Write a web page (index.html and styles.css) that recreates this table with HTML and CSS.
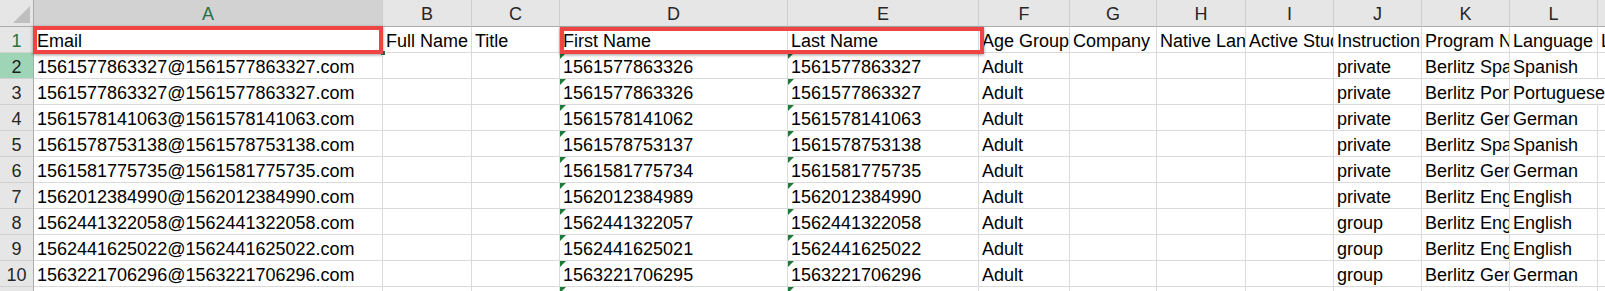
FILE: index.html
```html
<!DOCTYPE html>
<html lang="en">

<head>
    <meta charset="UTF-8">
    <meta name="viewport" content="width=device-width, initial-scale=1.0">
    <title>Students export</title>
    <link rel="stylesheet" href="styles.css">
</head>

<body>

    <div class="sheet">
        <!-- column headers -->
        <div class="corner"><span class="corner-tri"></span></div>
        <div class="col-head active">A</div>
        <div class="col-head">B</div>
        <div class="col-head">C</div>
        <div class="col-head">D</div>
        <div class="col-head">E</div>
        <div class="col-head">F</div>
        <div class="col-head">G</div>
        <div class="col-head">H</div>
        <div class="col-head">I</div>
        <div class="col-head">J</div>
        <div class="col-head">K</div>
        <div class="col-head">L</div>
        <div class="col-head">M</div>

        <!-- row 1 -->
        <div class="row-head current">1</div>
        <div class="cell">Email</div>
        <div class="cell">Full Name</div>
        <div class="cell">Title</div>
        <div class="cell">First Name</div>
        <div class="cell">Last Name</div>
        <div class="cell">Age Group</div>
        <div class="cell">Company</div>
        <div class="cell">Native Language</div>
        <div class="cell">Active Student</div>
        <div class="cell">Instruction Type</div>
        <div class="cell">Program Name</div>
        <div class="cell">Language</div>
        <div class="cell">Level</div>

        <!-- row 2 -->
        <div class="row-head picked">2</div>
        <div class="cell">1561577863327@1561577863327.com</div>
        <div class="cell"></div>
        <div class="cell"></div>
        <div class="cell txt">1561577863326</div>
        <div class="cell txt">1561577863327</div>
        <div class="cell">Adult</div>
        <div class="cell"></div>
        <div class="cell"></div>
        <div class="cell"></div>
        <div class="cell">private</div>
        <div class="cell">Berlitz Spanish</div>
        <div class="cell">Spanish</div>
        <div class="cell"></div>

        <!-- row 3 -->
        <div class="row-head">3</div>
        <div class="cell">1561577863327@1561577863327.com</div>
        <div class="cell"></div>
        <div class="cell"></div>
        <div class="cell txt">1561577863326</div>
        <div class="cell txt">1561577863327</div>
        <div class="cell">Adult</div>
        <div class="cell"></div>
        <div class="cell"></div>
        <div class="cell"></div>
        <div class="cell">private</div>
        <div class="cell">Berlitz Portuguese</div>
        <div class="cell spill">Portuguese</div>
        <div class="cell"></div>

        <!-- row 4 -->
        <div class="row-head">4</div>
        <div class="cell">1561578141063@1561578141063.com</div>
        <div class="cell"></div>
        <div class="cell"></div>
        <div class="cell txt">1561578141062</div>
        <div class="cell txt">1561578141063</div>
        <div class="cell">Adult</div>
        <div class="cell"></div>
        <div class="cell"></div>
        <div class="cell"></div>
        <div class="cell">private</div>
        <div class="cell">Berlitz German</div>
        <div class="cell">German</div>
        <div class="cell"></div>

        <!-- row 5 -->
        <div class="row-head">5</div>
        <div class="cell">1561578753138@1561578753138.com</div>
        <div class="cell"></div>
        <div class="cell"></div>
        <div class="cell txt">1561578753137</div>
        <div class="cell txt">1561578753138</div>
        <div class="cell">Adult</div>
        <div class="cell"></div>
        <div class="cell"></div>
        <div class="cell"></div>
        <div class="cell">private</div>
        <div class="cell">Berlitz Spanish</div>
        <div class="cell">Spanish</div>
        <div class="cell"></div>

        <!-- row 6 -->
        <div class="row-head">6</div>
        <div class="cell">1561581775735@1561581775735.com</div>
        <div class="cell"></div>
        <div class="cell"></div>
        <div class="cell txt">1561581775734</div>
        <div class="cell txt">1561581775735</div>
        <div class="cell">Adult</div>
        <div class="cell"></div>
        <div class="cell"></div>
        <div class="cell"></div>
        <div class="cell">private</div>
        <div class="cell">Berlitz German</div>
        <div class="cell">German</div>
        <div class="cell"></div>

        <!-- row 7 -->
        <div class="row-head">7</div>
        <div class="cell">1562012384990@1562012384990.com</div>
        <div class="cell"></div>
        <div class="cell"></div>
        <div class="cell txt">1562012384989</div>
        <div class="cell txt">1562012384990</div>
        <div class="cell">Adult</div>
        <div class="cell"></div>
        <div class="cell"></div>
        <div class="cell"></div>
        <div class="cell">private</div>
        <div class="cell">Berlitz English</div>
        <div class="cell">English</div>
        <div class="cell"></div>

        <!-- row 8 -->
        <div class="row-head">8</div>
        <div class="cell">1562441322058@1562441322058.com</div>
        <div class="cell"></div>
        <div class="cell"></div>
        <div class="cell txt">1562441322057</div>
        <div class="cell txt">1562441322058</div>
        <div class="cell">Adult</div>
        <div class="cell"></div>
        <div class="cell"></div>
        <div class="cell"></div>
        <div class="cell">group</div>
        <div class="cell">Berlitz English</div>
        <div class="cell">English</div>
        <div class="cell"></div>

        <!-- row 9 -->
        <div class="row-head">9</div>
        <div class="cell">1562441625022@1562441625022.com</div>
        <div class="cell"></div>
        <div class="cell"></div>
        <div class="cell txt">1562441625021</div>
        <div class="cell txt">1562441625022</div>
        <div class="cell">Adult</div>
        <div class="cell"></div>
        <div class="cell"></div>
        <div class="cell"></div>
        <div class="cell">group</div>
        <div class="cell">Berlitz English</div>
        <div class="cell">English</div>
        <div class="cell"></div>

        <!-- row 10 -->
        <div class="row-head">10</div>
        <div class="cell">1563221706296@1563221706296.com</div>
        <div class="cell"></div>
        <div class="cell"></div>
        <div class="cell txt">1563221706295</div>
        <div class="cell txt">1563221706296</div>
        <div class="cell">Adult</div>
        <div class="cell"></div>
        <div class="cell"></div>
        <div class="cell"></div>
        <div class="cell">group</div>
        <div class="cell">Berlitz German</div>
        <div class="cell">German</div>
        <div class="cell"></div>

        <!-- row 11 (cut off) -->
        <div class="row-head">11</div>
        <div class="cell"></div>
        <div class="cell"></div>
        <div class="cell"></div>
        <div class="cell txt"></div>
        <div class="cell txt"></div>
        <div class="cell"></div>
        <div class="cell"></div>
        <div class="cell"></div>
        <div class="cell"></div>
        <div class="cell"></div>
        <div class="cell"></div>
        <div class="cell"></div>
        <div class="cell"></div>

        <!-- overlays -->
        <span class="fill-handle"></span>
        <span class="mark mark-email"></span>
        <span class="mark mark-names"></span>
    </div>

</body>

</html>
```

FILE: styles.css
```css
* {
    padding: 0;
    margin: 0;
    box-sizing: border-box;
}

body {
    background-color: #fff;
    font-family: 'Liberation Sans', Arial, sans-serif;
    font-size: 18px;
    color: #000;
    overflow: hidden;
}

.sheet {
    position: relative;
    display: grid;
    grid-template-columns: 34px 349px 89px 88px 228px 191px 91px 87px 89px 88px 88px 88px 88px 60px;
    grid-template-rows: 27px;
    grid-auto-rows: 26px;
}

.corner,
.col-head,
.row-head,
.cell {
    white-space: nowrap;
    overflow: hidden;
    padding-top: 4px;
    line-height: 21px;
}

.corner {
    position: relative;
    background: #e6e6e6;
    border-right: 1px solid #ababab;
    border-bottom: 1px solid #ababab;
}

.corner-tri {
    position: absolute;
    right: 3px;
    bottom: 3px;
    width: 0;
    height: 0;
    border-left: 17px solid transparent;
    border-bottom: 17px solid #bfbfbf;
}

.col-head {
    background: #e6e6e6;
    color: #262626;
    text-align: center;
    border-right: 1px solid #cfcfcf;
    border-bottom: 1px solid #ababab;
}

.col-head.active {
    background: #d2d2d2;
    color: #217346;
}

.row-head {
    background: #e6e6e6;
    color: #262626;
    text-align: center;
    border-right: 1px solid #ababab;
    border-bottom: 1px solid #d0d0d0;
}

.row-head.current {
    color: #217346;
}

.row-head.picked {
    background: #9fd5b7;
    color: #1c1c1c;
}

.cell {
    position: relative;
    padding-left: 3px;
    padding-right: 0;
    border-right: 1px solid #dadada;
    border-bottom: 1px solid #dadada;
}

/* text that runs into the empty neighbour */
.cell.spill {
    overflow: visible;
    border-right-color: transparent;
    z-index: 1;
}

/* numbers stored as text */
.cell.txt::before {
    content: "";
    position: absolute;
    top: 0;
    left: 0;
    width: 0;
    height: 0;
    border-top: 6px solid #1f7a3a;
    border-right: 6px solid transparent;
}

.fill-handle {
    position: absolute;
    left: 380px;
    top: 50px;
    width: 6px;
    height: 6px;
    background: #217346;
    border: 1px solid #fff;
}

.mark {
    position: absolute;
    border: 4px solid #f04343;
    box-shadow: 0 1px 3px rgba(0, 0, 0, 0.4);
    z-index: 2;
}

.mark-email {
    left: 33px;
    top: 26px;
    width: 350px;
    height: 28px;
}

.mark-names {
    left: 560px;
    top: 27px;
    width: 424px;
    height: 27px;
}
```
